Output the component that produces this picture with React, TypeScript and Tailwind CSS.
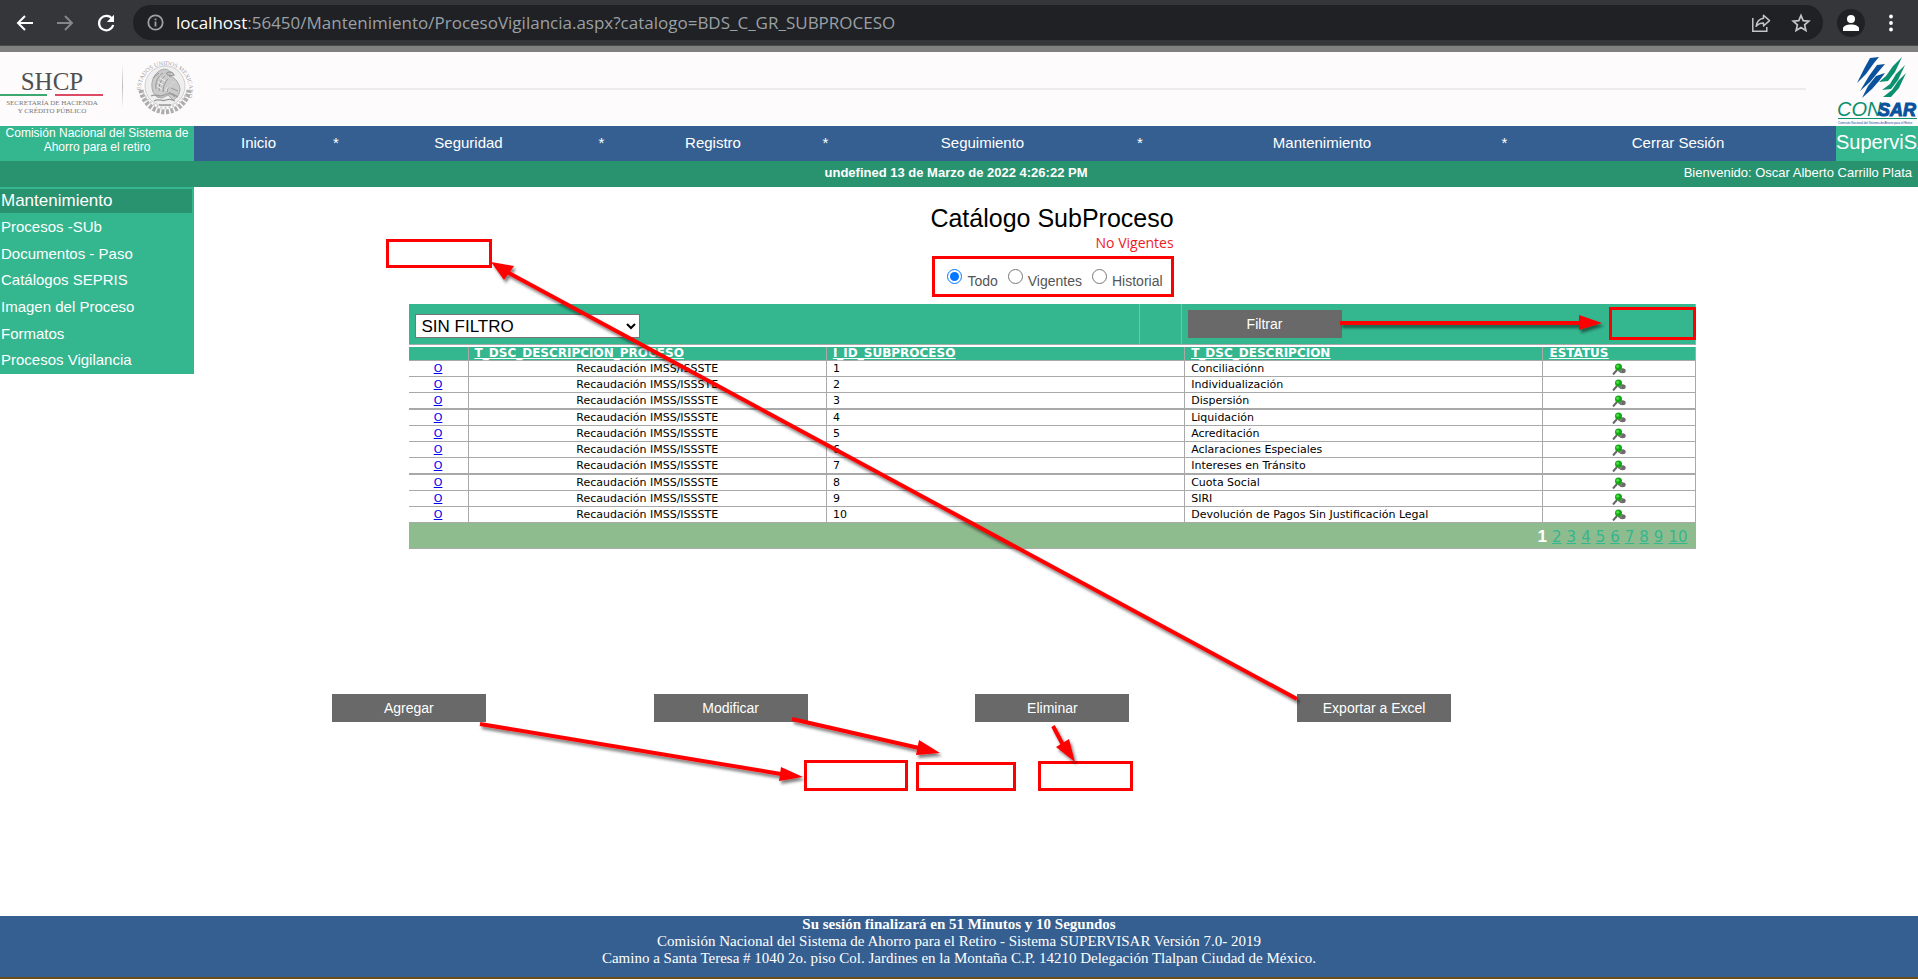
import React from "react";

const NAV = ["Inicio", "Seguridad", "Registro", "Seguimiento", "Mantenimiento", "Cerrar Sesión"];
const SIDE = ["Procesos -SUb", "Documentos - Paso", "Catálogos SEPRIS", "Imagen del Proceso", "Formatos", "Procesos Vigilancia"];
const ROWS = [
  "Conciliaciónn",
  "Individualización",
  "Dispersión",
  "Liquidación",
  "Acreditación",
  "Aclaraciones Especiales",
  "Intereses en Tránsito",
  "Cuota Social",
  "SIRI",
  "Devolución de Pagos Sin Justificación Legal",
];
const PAGES = ["2", "3", "4", "5", "6", "7", "8", "9", "10"];
const ACTIONS = ["Agregar", "Modificar", "Eliminar", "Exportar a Excel"];

function BrowserBar() {
  return (
    <div className="flex h-[46px] items-center border-b border-[#4a4b4d] bg-[#35363a] pr-[21px] font-['Open_Sans',sans-serif]">
      <button aria-label="Atrás" className="ml-4 flex size-[18px] items-center justify-center">
        <svg width="18" height="18" viewBox="0 0 18 18" fill="none" stroke="#fff" strokeWidth="2">
          <path d="M17 9H2.5M9 2L2 9l7 7" />
        </svg>
      </button>
      <button aria-label="Adelante" className="ml-[22px] flex size-[18px] items-center justify-center">
        <svg width="18" height="18" viewBox="0 0 18 18" fill="none" stroke="#85868a" strokeWidth="2">
          <path d="M1 9h14.5M9 2l7 7-7 7" />
        </svg>
      </button>
      <button aria-label="Recargar" className="ml-[22px] flex size-[20px] items-center justify-center">
        <svg width="20" height="20" viewBox="0 0 20 20" fill="none">
          <path d="M16.3 6.2A7.2 7.2 0 1 0 17.2 12" stroke="#fff" strokeWidth="2.2" />
          <path d="M18 1.8V9h-7.2z" fill="#fff" />
        </svg>
      </button>
      <div className="ml-[17px] flex h-[35px] flex-1 items-center rounded-full bg-[#202124] pr-3 pl-[14px]">
        <svg width="17" height="17" viewBox="0 0 17 17" fill="none" stroke="#9aa0a6" strokeWidth="1.8">
          <circle cx="8.5" cy="8.5" r="7.2" />
          <path d="M8.5 7.5v5M8.5 4.4v1.8" />
        </svg>
        <p className="ml-3 flex-1 text-[17px] leading-6 text-[#9aa0a6]">
          <span className="text-white">localhost</span>
          :56450/Mantenimiento/ProcesoVigilancia.aspx?catalogo=BDS_C_GR_SUBPROCESO
        </p>
        <button aria-label="Compartir">
          <svg width="20" height="20" viewBox="0 0 20 20" fill="none" stroke="#c4c5c8" strokeWidth="1.5">
            <path d="M1.8 5v13.2h14V14" />
            <path d="M12.5 2.2l6 5.4-6 5.4V9.9c-3.4 0-5.5 1-7.3 3.4.5-4 2.9-7.3 7.3-8z" strokeLinejoin="round" />
          </svg>
        </button>
        <button aria-label="Favorito" className="ml-5">
          <svg width="20" height="20" viewBox="0 0 20 20" fill="none" stroke="#c4c5c8" strokeWidth="1.7">
            <path d="M10 2.5l2.2 5.2 5.6.5-4.2 3.7 1.3 5.5L10 14.5l-4.9 2.9 1.3-5.5L2.200 8.200l5.600-.5z" />
          </svg>
        </button>
      </div>
      <button aria-label="Perfil" className="ml-[14px] flex size-[28px] items-center justify-center rounded-full bg-[#202124]">
        <svg width="16" height="16" viewBox="0 0 16 16" fill="#fff">
          <circle cx="8" cy="4" r="4" />
          <path d="M0 16v-2.5C0 11 4 9.500 8 9.500s8 1.500 8 4V16z" />
        </svg>
      </button>
      <button aria-label="Menú" className="ml-5 flex h-5 w-3 items-center justify-center">
        <svg width="4" height="18" viewBox="0 0 4 18" fill="#fff">
          <circle cx="2" cy="2.5" r="1.9" />
          <circle cx="2" cy="9" r="1.9" />
          <circle cx="2" cy="15.5" r="1.9" />
        </svg>
      </button>
    </div>
  );
}

function Seal() {
  return (
    <svg width="58" height="58" viewBox="0 0 58 58" fill="none" role="img" aria-label="Estados Unidos Mexicanos">
      <defs>
        <path id="sealArc" d="M6 38A24 24 0 1 1 52 38" />
      </defs>
      <circle cx="29" cy="28" r="20" fill="#efefef" stroke="#cfcfcf" strokeWidth="1" />
      <text fontSize="6" fill="#a2a2a2" fontFamily="Liberation Serif, serif">
        <textPath href="#sealArc" startOffset="6">ESTADOS UNIDOS MEXICANOS</textPath>
      </text>
      <path d="M5 32c2 12 11 21 24 22 13-1 22-10 24-22" stroke="#adadad" strokeWidth="5" strokeDasharray="3 1.500" />
      <path d="M7 34c4 9 11 15 22 16 11-1 18-7 22-16" stroke="#cfcfcf" strokeWidth="2" strokeDasharray="2 2" />
      <path d="M17 34c-3-9 0-18 8-22 5-2 9 0 10 4l-4 1c6 1 12 6 13 14 0 5-3 9-7 11l-5-5-6 3-5-1z" fill="#cbcbcb" stroke="#a8a8a8" />
      <path d="M20 31c-1-7 2-13 7-16M23 33c0-7 2-12 6-15M27 34c0-6 2-10 5-13M31 34c1-5 3-8 6-9M17 20l6-5M35 30l7 3M33 34l6 5" stroke="#989898" />
      <path d="M30 16c3-3 6-3 8 1l-5 1M15 38c5-3 8 2 13-1s9-1 14 2M18 43c5-3 8 1 12-1s6 0 9 1M23 47h12" stroke="#9a9a9a" strokeWidth="1.3" />
      <path d="M21 28l5 3M22 24l5 3M24 20l5 3M37 24c-3 5-6 4-7 9" stroke="#f3f3f3" />
    </svg>
  );
}

function Consar() {
  return (
    <svg width="82" height="74" viewBox="0 0 82 74" className="shrink-0" role="img" aria-label="CONSAR">
      <g fill="#0b529c">
        <path d="M43 5l-9 1-5 9-8 16 9-9 8-11z" />
        <path d="M49 12l-8 1-8 11-9 15 10-9 9-11z" />
        <path d="M49 21l-9 3-8 10-6 12 10-9 7-8z" />
      </g>
      <g fill="#0b9070">
        <path d="M66 5l-9 9-7 10-7 6 9-1 7-9z" />
        <path d="M69 13l-9 9-6 10-8 6 9-1 7-9z" />
        <path d="M70 21l-8 8-6 9-9 7h8l8-9z" />
      </g>
      <text x="1" y="64" fontSize="20" fontStyle="italic" fontFamily="Liberation Sans, sans-serif" fill="#0b9070">CON</text>
      <text x="42" y="64" fontSize="18" fontStyle="italic" fontWeight="bold" fontFamily="Liberation Sans, sans-serif" fill="#0b529c" stroke="#0b529c" strokeWidth="1">SAR</text>
      <path d="M2 66.500h79" stroke="#0b9070" />
      <text x="2" y="72" fontSize="3" fontFamily="Liberation Sans, sans-serif" fill="#0b529c">Comisión Nacional del Sistema de Ahorro para el Retiro</text>
    </svg>
  );
}

function Header() {
  return (
    <header className="flex h-[80px] items-start border-t-[6px] border-[#808080] bg-[#fdfbfc]">
      <div className="flex w-[104px] shrink-0 flex-col items-center pt-[18px] font-['Liberation_Serif',serif] text-[#4f4f4f]">
        <div className="text-[25px] leading-[23px]">SHCP</div>
        <div className="mt-[1px] flex w-full gap-2">
          <span className="h-[2px] w-[47px] bg-[#3ea871]" />
          <span className="h-[2px] w-[48px] bg-[#dd4a63]" />
        </div>
        <div className="mt-[3px] text-center text-[7px] leading-[8px] whitespace-nowrap text-[#777]">
          SECRETARÍA DE HACIENDA
          <br />
          Y CRÉDITO PÚBLICO
        </div>
      </div>
      <div className="mt-3 ml-[18px] h-[44px] w-px bg-linear-to-b from-transparent via-[#bbb] to-transparent" />
      <div className="mt-[6px] ml-[13px] shrink-0">
        <Seal />
      </div>
      <div className="mt-[36px] mr-[30px] ml-[26px] h-[2px] flex-1 bg-[#ececec]" />
      <Consar />
    </header>
  );
}

function Nav() {
  return (
    <div className="flex h-[35px] bg-[#365f91] text-white">
      <div className="w-[194px] shrink-0 bg-[#34b68f] text-center text-[12px] leading-[14px] whitespace-nowrap">
        Comisión Nacional del Sistema de
        <br />
        Ahorro para el retiro
      </div>
      <nav className="grid flex-1 grid-cols-[129fr_26fr_239fr_27fr_196fr_29fr_285fr_30fr_334fr_31fr_316fr] items-center text-center text-[15px]">
        {NAV.map((n, i) => (
          <React.Fragment key={n}>
            {i > 0 && <span>*</span>}
            <a href="#">{n}</a>
          </React.Fragment>
        ))}
      </nav>
      <div className="w-[82px] shrink-0 overflow-hidden bg-[#34b68f] text-[20px] leading-[33px]">SuperviSAR</div>
    </div>
  );
}

function Pin() {
  return (
    <svg width="14" height="12" viewBox="0 0 14 12" className="mx-auto block" role="img" aria-label="Vigente">
      <path d="M1 11.500l4-4.500" stroke="#666" strokeWidth="2" />
      <ellipse cx="10.500" cy="7.800" rx="3.200" ry="2.500" fill="#6b6b6b" />
      <path d="M5 7l5-1.500v4L7 9z" fill="#7d7d7d" />
      <circle cx="6.500" cy="4" r="3.500" fill="#14a814" />
      <circle cx="5.700" cy="3.200" r="1.500" fill="#4fdc4f" />
    </svg>
  );
}

function Grid() {
  const th = "border-r border-b border-[#a9a9a9] pl-[6px] text-left font-bold underline";
  return (
    <div className="w-full font-['DejaVu_Sans',sans-serif]">
      <div className="grid h-[41px] grid-cols-[731fr_42fr_513fr] border-r border-b border-[#a9a9a9] bg-[#34b68f] font-['Liberation_Sans',sans-serif]">
        <div className="border-r border-[#8fb5a5] pt-[10px] pl-[6px]">
          <select aria-label="Filtro" className="h-[24px] w-[225px] border border-[#767676] bg-white pl-[2px] text-[17px] leading-[20px] text-black">
            <option>SIN FILTRO</option>
          </select>
        </div>
        <div className="border-r border-[#8fb5a5]" />
        <div className="pt-[6px] pl-[6px]">
          <button className="block h-[28px] w-[154px] bg-[#696969] text-[14px] text-white">Filtrar</button>
        </div>
      </div>
      <table className="mt-[2px] w-full table-fixed border-separate border-spacing-0 text-[11px] leading-[13px]">
        <colgroup>
          <col className="w-[4.67%]" />
          <col className="w-[27.84%]" />
          <col className="w-[27.84%]" />
          <col className="w-[27.84%]" />
          <col />
        </colgroup>
        <thead className="text-[12px]">
          <tr className="h-[14px] bg-[#34b68f] text-white">
            <th className="border-r border-b border-[#a9a9a9]" />
            <th className={th}><a href="#">T_DSC_DESCRIPCION_PROCESO</a></th>
            <th className={th}><a href="#">I_ID_SUBPROCESO</a></th>
            <th className={th}><a href="#">T_DSC_DESCRIPCION</a></th>
            <th className={th}><a href="#">ESTATUS</a></th>
          </tr>
        </thead>
        <tbody className="[&_td]:border-r [&_td]:border-b [&_td]:border-[#a9a9a9] [&_tr:nth-child(4n+3)_td]:border-b-2">
          {ROWS.map((r, i) => (
            <tr key={r} className="h-4 nth-[4n+3]:h-[17px]">
              <td className="text-center"><a href="#" className="text-[#0000ee] underline">O</a></td>
              <td className="text-center">Recaudación IMSS/ISSSTE</td>
              <td className="pl-[6px]">{i + 1}</td>
              <td className="pl-[6px]">{r}</td>
              <td><Pin /></td>
            </tr>
          ))}
        </tbody>
      </table>
      <div className="flex h-[26px] items-center justify-end gap-[5px] border-r border-b border-[#a9a9a9] bg-[#8fbc8f] pt-[3px] pr-[7px] text-[15px] text-[#34b68f]">
        <span className="font-['Liberation_Sans',sans-serif] text-[17px] font-bold text-white">1</span>
        {PAGES.map((p) => (
          <a key={p} href="#" className="underline">{p}</a>
        ))}
      </div>
    </div>
  );
}

function Annotations() {
  return (
    <svg className="pointer-events-none absolute top-0 left-0" width="1918" height="979" viewBox="0 0 1918 979" fill="none" aria-hidden="true">
      <defs>
        <filter id="arrowShadow" filterUnits="userSpaceOnUse" x="0" y="0" width="1918" height="979">
          <feDropShadow dx="2" dy="3" stdDeviation="1.5" floodColor="#000" floodOpacity="0.5" />
        </filter>
      </defs>
      <g stroke="#f00" strokeWidth="3">
        <rect x="387.5" y="240.5" width="103" height="26" />
        <rect x="933.5" y="257.5" width="239" height="38" />
        <rect x="1610.5" y="308.5" width="84" height="30" />
        <rect x="805.5" y="761.5" width="101" height="28" />
        <rect x="917.5" y="763.5" width="97" height="26" />
        <rect x="1039.5" y="762.5" width="92" height="27" />
      </g>
      <g stroke="#f00" strokeWidth="4" filter="url(#arrowShadow)">
        <path d="M1297 699L507 272M480 724l301 50M792 719l127 29M1053 726l10 19M1340 323h240" />
        <g fill="#f00" stroke="none">
          <path d="M491 262l23 4-10 14z" />
          <path d="M803 777l-22-10-2 14z" />
          <path d="M940 753l-21-13-3 15z" />
          <path d="M1075 762l-19-15 13-8z" />
          <path d="M1602 323l-23-8v15z" />
        </g>
      </g>
    </svg>
  );
}

export default function App() {
  return (
    <div className="relative flex min-h-screen flex-col overflow-hidden bg-white font-['Liberation_Sans',sans-serif] text-black">
      <BrowserBar />
      <Header />
      <Nav />
      <div className="grid h-[26px] grid-cols-[1fr_auto_1fr] items-center bg-[#29926f] pr-[6px] pb-[3px] text-[13px] text-white">
        <span />
        <span className="font-bold">undefined 13 de Marzo de 2022 4:26:22 PM</span>
        <span className="text-right">Bienvenido: Oscar Alberto Carrillo Plata</span>
      </div>
      <div className="flex flex-1">
        <aside className="flex h-[187px] w-[194px] shrink-0 flex-col bg-[#34b68f] pt-[2px] pr-[2px] text-white">
          <h2 className="h-6 bg-[#29926f] pl-[1px] text-[17px] leading-6">Mantenimiento</h2>
          <ul className="flex flex-1 flex-col pt-[1px] pl-[1px] text-[15px]">
            {SIDE.map((s) => (
              <li key={s} className="flex flex-1 items-center">
                <a href="#">{s}</a>
              </li>
            ))}
          </ul>
        </aside>
        <main className="mr-2 flex-1">
          <div className="mx-auto flex w-3/4 flex-col items-center pt-4">
            <div className="text-right">
              <h1 className="text-[25px] leading-[30px]">Catálogo SubProceso</h1>
              <p className="font-['Open_Sans',sans-serif] text-[14px] leading-5 text-[#ed1c24]">No Vigentes</p>
            </div>
            <div role="radiogroup" aria-label="Vigencia" className="flex h-[51px] items-end gap-[10px] pb-[11px] pl-[6px] text-[14px] text-[#555]">
              {["Todo", "Vigentes", "Historial"].map((l, i) => (
                <label key={l} className="flex items-start gap-[5px] leading-6">
                  <input type="radio" name="vigencia" defaultChecked={i === 0} className="size-[15px]" />
                  {l}
                </label>
              ))}
            </div>
            <Grid />
          </div>
          <div className="mt-[145px] ml-[54px] grid w-3/4 grid-cols-4 justify-items-center">
            {ACTIONS.map((a) => (
              <button key={a} className="h-[28px] w-[154px] bg-[#696969] text-[14px] text-white">{a}</button>
            ))}
          </div>
        </main>
      </div>
      <footer className="h-[63px] border-b-2 border-[#6b4a1c] bg-[#365f91] text-center font-['Liberation_Serif',serif] text-[15px] leading-[17px] text-white">
        <p className="font-bold">Su sesión finalizará en 51 Minutos y 10 Segundos</p>
        <p>Comisión Nacional del Sistema de Ahorro para el Retiro - Sistema SUPERVISAR Versión 7.0- 2019</p>
        <p>Camino a Santa Teresa # 1040 2o. piso Col. Jardines en la Montaña C.P. 14210 Delegación Tlalpan Ciudad de México.</p>
      </footer>
      <Annotations />
    </div>
  );
}
